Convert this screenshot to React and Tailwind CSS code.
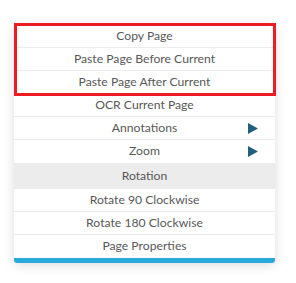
import React from 'react';

const topItems = ['Copy Page', 'Paste Page Before Current', 'Paste Page After Current'];

function Row({ label, arrow, last }) {
  return (
    <div
      className={`relative flex h-[23px] items-center justify-center ${last ? '' : 'border-b border-[#ececec]'}`}
    >
      <span>{label}</span>
      {arrow && (
        <svg className="absolute left-[234px] top-[6px]" width="10" height="11" viewBox="0 0 10 11">
          <path d="M0 0 L10 5.5 L0 11 Z" fill="#225f7e" />
        </svg>
      )}
    </div>
  );
}

export default function App() {
  return (
    <div className="min-h-[283px] w-[296px] bg-white pl-[14px] pt-[25px]" style={{ fontFamily: 'Lato, sans-serif' }}>
      <div className="relative w-[261px] rounded-b-[3px] bg-white text-[12.2px] text-[#585858] shadow-[0_2px_12px_rgba(0,0,0,0.14)]">
        {topItems.map((t) => (
          <Row key={t} label={t} />
        ))}
        <Row label="OCR Current Page" />
        <Row label="Annotations" arrow />
        <Row label="Zoom" arrow last />
        <div className="flex h-[26px] items-center justify-center bg-[#ececec]">Rotation</div>
        <Row label="Rotate 90 Clockwise" />
        <Row label="Rotate 180 Clockwise" />
        <Row label="Page Properties" last />
        <div className="h-[5px] rounded-b-[3px] bg-[#29a9dc]" />
        <div className="absolute left-0 top-[-2px] h-[73px] w-[262px] border-[3px] border-[#ed1c24]" />
      </div>
    </div>
  );
}
